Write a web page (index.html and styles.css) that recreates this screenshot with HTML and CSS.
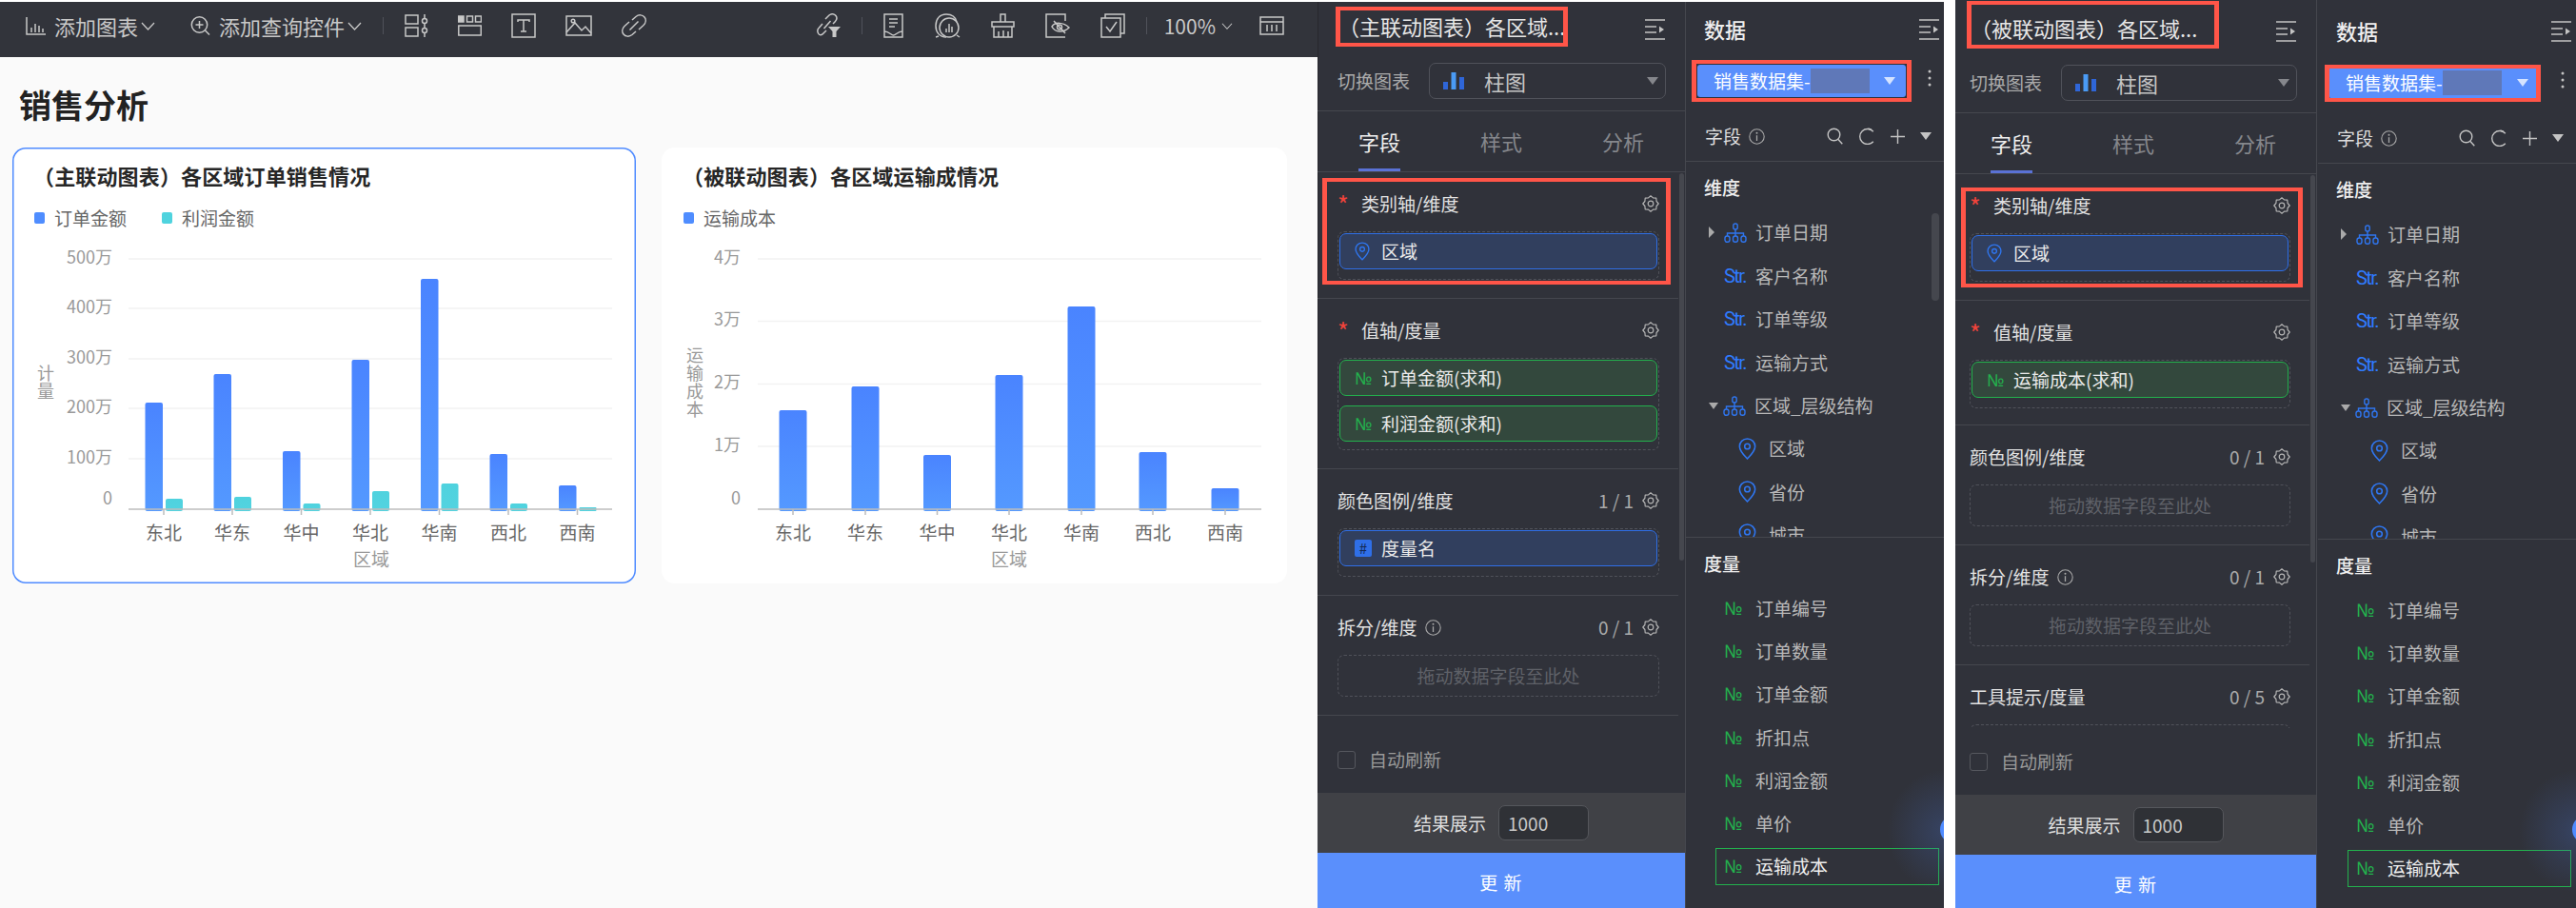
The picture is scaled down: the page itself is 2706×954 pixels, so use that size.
FILE: index.html
```html
<!DOCTYPE html>
<html lang="zh-CN">
<head>
<meta charset="utf-8">
<title>销售分析</title>
<link rel="stylesheet" href="styles.css">
</head>
<body>
<svg class="defs" aria-hidden="true">
  <defs>
    <linearGradient id="gBlue" x1="0" y1="0" x2="0" y2="1"><stop offset="0" stop-color="#4a84ff"/><stop offset="1" stop-color="#5499ff"/></linearGradient>
    <linearGradient id="gTeal" x1="0" y1="0" x2="0" y2="1"><stop offset="0" stop-color="#4fd2de"/><stop offset="1" stop-color="#52d3e0"/></linearGradient>
    <symbol id="gear" viewBox="0 0 18 18"><path d="M17.2 9 15.1 11.500 14.800 14.800 11.500 15.100 9 17.200 6.500 15.100 3.200 14.800 2.900 11.500.8 9 2.900 6.500 3.200 3.200 6.500 2.900 9 .8 11.500 2.900 14.800 3.200 15.100 6.500Z" fill="none" stroke="#b4b4b4" stroke-width="1.200" stroke-linejoin="round"/><circle cx="9" cy="9" r="2.800" fill="none" stroke="#b4b4b4" stroke-width="1.200"/></symbol>
    <symbol id="pin" viewBox="0 0 18 22"><path d="M9 1C4.600 1 1.200 4.400 1.200 8.600 1.200 13.500 6.500 18.500 9 21c2.500-2.500 7.800-7.500 7.800-12.400C16.800 4.400 13.400 1 9 1Z" fill="none" stroke="#2f76f0" stroke-width="1.500"/><circle cx="9" cy="8.600" r="2.700" fill="none" stroke="#2f76f0" stroke-width="1.500"/></symbol>
    <symbol id="hier" viewBox="0 0 24 21"><g fill="none" stroke="#2f76f0" stroke-width="1.400"><rect x="9.800" y="1" width="4.400" height="6" rx="2"/><path d="M12 7v4M3.500 14v-3h17v3M12 11v3"/><rect x="1" y="14" width="5" height="6.300" rx="2.200"/><rect x="9.500" y="14" width="5" height="6.300" rx="2.200"/><rect x="18" y="14" width="5" height="6.300" rx="2.200"/></g></symbol>
    <symbol id="collapse" viewBox="0 0 21 22"><path d="M0 1H21M0 8H12M0 14H12M0 21H21" fill="none" stroke="#c4c4c4" stroke-width="1.400"/><path d="M15 7.500 20 11 15 14.500Z" fill="#c4c4c4"/></symbol>
    <symbol id="info" viewBox="0 0 17 17"><circle cx="8.500" cy="8.500" r="7.700" fill="none" stroke="#a8a8a8" stroke-width="1.100"/><path d="M8.500 7.200V13" stroke="#a8a8a8" stroke-width="1.300"/><circle cx="8.500" cy="4.700" r="1" fill="#a8a8a8"/></symbol>
    <symbol id="search" viewBox="0 0 17 18"><circle cx="7.500" cy="7.500" r="6.300" fill="none" stroke="#c4c4c4" stroke-width="1.400"/><path d="M12 12.500 16.300 17.300" stroke="#c4c4c4" stroke-width="1.400"/></symbol>
    <symbol id="refresh" viewBox="0 0 18 18"><path d="M15.800 4.300A8 8 0 1 0 15.800 14.700" fill="none" stroke="#c4c4c4" stroke-width="1.400"/><path d="M10.500 1 14 2.300" stroke="#c4c4c4" stroke-width="1.400"/></symbol>
    <symbol id="plus" viewBox="0 0 15 15"><path d="M7.500 0V15M0 7.500H15" stroke="#c4c4c4" stroke-width="1.400"/></symbol>
    <symbol id="kebab" viewBox="0 0 4 18"><circle cx="2" cy="2" r="1.500" fill="#c4c4c4"/><circle cx="2" cy="9" r="1.500" fill="#c4c4c4"/><circle cx="2" cy="16" r="1.500" fill="#c4c4c4"/></symbol>
    <symbol id="columns" viewBox="0 0 22 18"><rect x="0" y="10" width="5" height="8" fill="#2f66d8"/><rect x="8.500" y="0" width="5" height="18" fill="#4a9bf5"/><rect x="17" y="5" width="5" height="13" fill="#2f66d8"/></symbol>
    <symbol id="chev" viewBox="0 0 15 9"><path d="M1 1 7.500 8 14 1" fill="none" stroke="#c8c8c8" stroke-width="1.300"/></symbol>
  </defs>
</svg>

<main class="stage">
  <section class="screen screen-a">
    <div class="editor">
      <header class="toolbar">
        <svg class="tsvg" width="21" height="19" viewBox="0 0 21 19"><path d="M1 0V18H21M6 16V11M10 16V7M14 16V9M18 16V12"/></svg>
        <span class="tool-text">添加图表</span>
        <svg class="chev" width="15" height="9"><use href="#chev"/></svg>
        <svg class="tsvg tool-next" width="21" height="20" viewBox="0 0 21 20"><circle cx="9.500" cy="9" r="8.200"/><path d="M9.500 5v8M5.500 9h8M15.500 15 20 19.500"/></svg>
        <span class="tool-text">添加查询控件</span>
        <svg class="chev" width="15" height="9"><use href="#chev"/></svg>
        <span class="tool-sep sep-left"></span>
        <div class="tool-icons left-icons">
          <svg class="tsvg" width="25" height="24" viewBox="0 0 25 24"><rect x="1" y="1" width="13" height="9"/><rect x="1" y="14" width="13" height="9"/><path d="M21 0V24"/><circle cx="21" cy="7" r="2.500" fill="#32343b"/><circle cx="21" cy="17" r="2.500" fill="#32343b"/></svg>
          <svg class="tsvg" width="25" height="22" viewBox="0 0 25 22"><rect x="0" y="1" width="6" height="6" fill="#c8c8c8"/><rect x="9.500" y="1" width="6" height="6"/><rect x="18.500" y="1" width="6" height="6"/><rect x=".8" y="11" width="23.500" height="10"/></svg>
          <svg class="tsvg" width="26" height="26" viewBox="0 0 26 26"><rect x="1" y="1" width="24" height="24"/><path d="M7 9V7H19V9M13 7V19M10 19H16"/></svg>
          <svg class="tsvg" width="28" height="22" viewBox="0 0 28 22"><rect x="1" y="1" width="26" height="20"/><path d="M1 18 10 8 17 16 21 12 27 19"/><circle cx="8" cy="6" r="1.800"/></svg>
          <svg class="tsvg" width="26" height="24" viewBox="0 0 26 24"><path d="M11 6 15 2.500C18 0 22 .5 24 3S25.500 9 23 11.500L18 16M15 18 11 21.500C8 24 4 23.500 2 21S.5 15 3 12.500L8 8M8.500 16.500 17.500 7.500"/></svg>
        </div>
        <div class="tool-icons right-icons">
          <svg class="tsvg" width="25" height="26" viewBox="0 0 25 26"><path d="M9 6 13 2C15.500 0 18.500.5 20 2.500S21 7 19 9L17 11M10 18 7 21C5 23.500 2.500 23 1.500 21S.8 16.500 2.500 15L6 11M7.500 16 14.500 8"/><path d="M12 14H25L20.500 19V25H16.500V19Z" fill="#c8c8c8" stroke="none"/></svg>
          <span class="tool-sep"></span>
          <svg class="tsvg" width="21" height="26" viewBox="0 0 21 26"><rect x="1" y="1" width="19" height="24"/><path d="M6 6H15M6 10H15M6 14H12M1 19 C6 19 8 23 10.500 23S15 19 20 19"/></svg>
          <svg class="tsvg" width="28" height="26" viewBox="0 0 28 26"><path d="M13 25C6 25 2 20 2 13S6 1 13 1C20 1 23 5 24 9"/><circle cx="16" cy="15" r="10"/><path d="M13 20V16M16 20V11M19 20V14M5 24 2 25M24 23 27 25"/></svg>
          <svg class="tsvg" width="25" height="26" viewBox="0 0 25 26"><path d="M10 9V1H15V9M1 9H24V14H1ZM3 14V25H22V14M8 25V19M13 25V18M18 25V19"/></svg>
          <svg class="tsvg" width="26" height="26" viewBox="0 0 26 26"><path d="M21 8V1H1V25H21"/><path d="M7 14C10 9 19 9 25 15 19 21 10 20 7 14ZM9 8 21 21"/><circle cx="15" cy="14.500" r="2.500"/></svg>
          <svg class="tsvg" width="26" height="26" viewBox="0 0 26 26"><path d="M5 5V1H25V21H21"/><rect x="1" y="5" width="20" height="20"/><path d="M6 14 10 19 17 9"/></svg>
          <span class="tool-sep"></span>
          <span class="tool-text zoom-val">100%</span>
          <svg class="chev zoom-chev" width="12" height="7"><use href="#chev"/></svg>
          <svg class="tsvg zoom-last" width="26" height="20" viewBox="0 0 26 20"><rect x="1" y="1" width="24" height="18"/><path d="M1 6H25M8 9V16M13 9V16M18 9V16"/></svg>
        </div>
      </header>

      <h1 class="page-title">销售分析</h1>

      <div class="cards">
        <article class="card card-active">
          <h2 class="card-title">（主联动图表）各区域订单销售情况</h2>
          <div class="legend">
            <i class="swatch blue"></i><span>订单金额</span>
            <i class="swatch teal"></i><span>利润金额</span>
          </div>
          <svg class="plot" width="655" height="363" viewBox="0 0 655 363">
            <g class="grid"><path d="M122 22H630M122 74H630M122 127H630M122 179H630M122 232H630"/></g>
            <g class="ylab">
              <text x="105" y="27">500万</text><text x="105" y="79">400万</text><text x="105" y="132">300万</text><text x="105" y="184">200万</text><text x="105" y="237">100万</text><text x="105" y="280">0</text>
            </g>
            <g fill="url(#gBlue)">
              <rect x="139.500" y="173" width="18.500" height="114" rx="2"/><rect x="211.500" y="143" width="18.500" height="144" rx="2"/><rect x="284" y="224" width="18.500" height="63" rx="2"/><rect x="356.500" y="128" width="18.500" height="159" rx="2"/><rect x="429" y="43" width="18.500" height="244" rx="2"/><rect x="501.500" y="227" width="18.500" height="60" rx="2"/><rect x="574" y="260" width="18.500" height="27" rx="2"/>
            </g>
            <g fill="url(#gTeal)">
              <rect x="161" y="274" width="18" height="13" rx="2"/><rect x="233" y="272" width="18" height="15" rx="2"/><rect x="305.500" y="279" width="18" height="8" rx="2"/><rect x="378" y="266" width="18" height="21" rx="2"/><rect x="450.500" y="258" width="18" height="29" rx="2"/><rect x="523" y="279" width="18" height="8" rx="2"/><rect x="595.500" y="283" width="18" height="4" rx="1"/>
            </g>
            <path class="axis" d="M122 285H630M159 285V291M231 285V291M303.500 285V291M376 285V291M448.500 285V291M521 285V291M593.500 285V291"/>
            <g class="xlab">
              <text x="159" y="317">东北</text><text x="231" y="317">华东</text><text x="303.500" y="317">华中</text><text x="376" y="317">华北</text><text x="448.500" y="317">华南</text><text x="521" y="317">西北</text><text x="593.500" y="317">西南</text>
            </g>
            <text class="xname" x="377" y="345">区域</text>
            <text class="yname" x="35" y="133">计量</text>
          </svg>
        </article>

        <article class="card">
          <h2 class="card-title">（被联动图表）各区域运输成情况</h2>
          <div class="legend">
            <i class="swatch blue"></i><span>运输成本</span>
          </div>
          <svg class="plot" width="657" height="363" viewBox="0 0 657 363">
            <g class="grid"><path d="M101 22H630M101 87.500H630M101 153.500H630M101 219H630"/></g>
            <g class="ylab">
              <text x="83" y="27">4万</text><text x="83" y="92">3万</text><text x="83" y="158">2万</text><text x="83" y="224">1万</text><text x="83" y="280">0</text>
            </g>
            <g fill="url(#gBlue)">
              <rect x="123.500" y="181" width="29" height="106" rx="2"/><rect x="199.500" y="156" width="29" height="131" rx="2"/><rect x="275" y="228" width="29" height="59" rx="2"/><rect x="350.500" y="144" width="29" height="143" rx="2"/><rect x="426.500" y="72" width="29" height="215" rx="2"/><rect x="501.500" y="225" width="29" height="62" rx="2"/><rect x="577.500" y="263" width="29" height="24" rx="2"/>
            </g>
            <path class="axis" d="M101 285H630M138 285V291M214 285V291M289.500 285V291M365 285V291M441 285V291M516 285V291M592 285V291"/>
            <g class="xlab">
              <text x="138" y="317">东北</text><text x="214" y="317">华东</text><text x="289.500" y="317">华中</text><text x="365" y="317">华北</text><text x="441" y="317">华南</text><text x="516" y="317">西北</text><text x="592" y="317">西南</text>
            </g>
            <text class="xname" x="365" y="345">区域</text>
            <text class="yname" x="35" y="114">运输成本</text>
          </svg>
        </article>
      </div>
    </div>

    <aside class="panel panel-a">
      <div class="p-head"><span class="p-title">（主联动图表）各区域...</span><svg class="p-collapse" width="21" height="22"><use href="#collapse"/></svg></div>
      <div class="switch"><span class="switch-label">切换图表</span><div class="select"><svg width="22" height="18"><use href="#columns"/></svg><span class="select-text">柱图</span><i class="tri-select"></i></div></div>
      <nav class="tabs"><span class="tab"><b class="tab-on">字段</b></span><span class="tab">样式</span><span class="tab">分析</span></nav>
      <div class="fields">
        <section class="fsec">
          <div class="fhead"><i class="star">*</i><span class="flabel">类别轴/维度</span><svg class="gear" width="18" height="18"><use href="#gear"/></svg></div>
          <div class="drop"><div class="pill pill-blue"><svg class="pin-s" width="16" height="20"><use href="#pin"/></svg><span>区域</span></div></div>
        </section>
        <section class="fsec">
          <div class="fhead"><i class="star">*</i><span class="flabel">值轴/度量</span><svg class="gear" width="18" height="18"><use href="#gear"/></svg></div>
          <div class="drop">
            <div class="pill pill-green"><span class="no">№</span><span>订单金额(求和)</span></div>
            <div class="pill pill-green"><span class="no">№</span><span>利润金额(求和)</span></div>
          </div>
        </section>
        <section class="fsec">
          <div class="fhead"><span class="flabel">颜色图例/维度</span><span class="count">1 / 1</span><svg class="gear" width="18" height="18"><use href="#gear"/></svg></div>
          <div class="drop"><div class="pill pill-blue"><span class="hash">#</span><span>度量名</span></div></div>
        </section>
        <section class="fsec">
          <div class="fhead"><span class="flabel">拆分/维度</span><svg class="finfo" width="17" height="17"><use href="#info"/></svg><span class="count">0 / 1</span><svg class="gear" width="18" height="18"><use href="#gear"/></svg></div>
          <div class="drop drop-empty">拖动数据字段至此处</div>
        </section>
        <i class="scroll"></i>
      </div>
      <div class="auto"><i class="check"></i><span>自动刷新</span></div>
      <div class="result"><span>结果展示</span><div class="num">1000</div></div>
      <div class="update">更 新</div>
      <i class="mark mark-a-title"></i>
      <i class="mark mark-a-axis"></i>
    </aside>

    <aside class="data">
      <div class="d-head"><span class="d-title">数据</span><svg class="d-collapse" width="21" height="22"><use href="#collapse"/></svg></div>
      <div class="dset"><div class="dselect"><span>销售数据集-</span><i class="blur"></i><i class="tri-data"></i></div><svg class="kebab" width="4" height="18"><use href="#kebab"/></svg></div>
      <div class="dfield"><span>字段</span><svg class="dinfo" width="17" height="17"><use href="#info"/></svg><svg class="dtool" width="17" height="18"><use href="#search"/></svg><svg width="18" height="18"><use href="#refresh"/></svg><svg width="15" height="15"><use href="#plus"/></svg><i class="tri-field"></i></div>
      <div class="dims">
        <div class="d-sect">维度</div>
        <div class="row"><i class="tri-r"></i><svg class="ico" width="24" height="21"><use href="#hier"/></svg><span>订单日期</span></div>
        <div class="row"><span class="str">Str.</span><span>客户名称</span></div>
        <div class="row"><span class="str">Str.</span><span>订单等级</span></div>
        <div class="row"><span class="str">Str.</span><span>运输方式</span></div>
        <div class="row"><i class="tri-d"></i><svg class="ico" width="24" height="21"><use href="#hier"/></svg><span>区域_层级结构</span></div>
        <div class="row sub"><svg class="ico" width="19" height="23"><use href="#pin"/></svg><span>区域</span></div>
        <div class="row sub"><svg class="ico" width="19" height="23"><use href="#pin"/></svg><span>省份</span></div>
        <div class="row sub"><svg class="ico" width="19" height="23"><use href="#pin"/></svg><span>城市</span></div>
        <i class="dscroll"></i>
      </div>
      <div class="d-sect">度量</div>
      <div class="row"><span class="no no-l">№</span><span>订单编号</span></div>
      <div class="row"><span class="no no-l">№</span><span>订单数量</span></div>
      <div class="row"><span class="no no-l">№</span><span>订单金额</span></div>
      <div class="row"><span class="no no-l">№</span><span>折扣点</span></div>
      <div class="row"><span class="no no-l">№</span><span>利润金额</span></div>
      <div class="row"><span class="no no-l">№</span><span>单价</span></div>
      <div class="row row-hl"><span class="no no-l">№</span><span>运输成本</span></div>
      <i class="glow"></i>
      <i class="mark mark-a-data"></i>
    </aside>
  </section>

  <section class="screen screen-b">
    <aside class="panel panel-b">
      <div class="p-head"><span class="p-title">（被联动图表）各区域...</span><svg class="p-collapse" width="21" height="22"><use href="#collapse"/></svg></div>
      <div class="switch"><span class="switch-label">切换图表</span><div class="select"><svg width="22" height="18"><use href="#columns"/></svg><span class="select-text">柱图</span><i class="tri-select"></i></div></div>
      <nav class="tabs"><span class="tab"><b class="tab-on">字段</b></span><span class="tab">样式</span><span class="tab">分析</span></nav>
      <div class="fields">
        <section class="fsec">
          <div class="fhead"><i class="star">*</i><span class="flabel">类别轴/维度</span><svg class="gear" width="18" height="18"><use href="#gear"/></svg></div>
          <div class="drop"><div class="pill pill-blue"><svg class="pin-s" width="16" height="20"><use href="#pin"/></svg><span>区域</span></div></div>
        </section>
        <section class="fsec fsec-tight">
          <div class="fhead"><i class="star">*</i><span class="flabel">值轴/度量</span><svg class="gear" width="18" height="18"><use href="#gear"/></svg></div>
          <div class="drop"><div class="pill pill-green"><span class="no">№</span><span>运输成本(求和)</span></div></div>
        </section>
        <section class="fsec">
          <div class="fhead"><span class="flabel">颜色图例/维度</span><span class="count">0 / 1</span><svg class="gear" width="18" height="18"><use href="#gear"/></svg></div>
          <div class="drop drop-empty">拖动数据字段至此处</div>
        </section>
        <section class="fsec">
          <div class="fhead"><span class="flabel">拆分/维度</span><svg class="finfo" width="17" height="17"><use href="#info"/></svg><span class="count">0 / 1</span><svg class="gear" width="18" height="18"><use href="#gear"/></svg></div>
          <div class="drop drop-empty">拖动数据字段至此处</div>
        </section>
        <section class="fsec">
          <div class="fhead"><span class="flabel">工具提示/度量</span><span class="count">0 / 5</span><svg class="gear" width="18" height="18"><use href="#gear"/></svg></div>
          <div class="drop drop-empty"></div>
        </section>
        <i class="scroll"></i>
      </div>
      <div class="auto"><i class="check"></i><span>自动刷新</span></div>
      <div class="result"><span>结果展示</span><div class="num">1000</div></div>
      <div class="update">更 新</div>
      <i class="mark mark-b-title"></i>
      <i class="mark mark-b-axis"></i>
    </aside>

    <aside class="data data-b">
      <div class="d-head"><span class="d-title">数据</span><svg class="d-collapse" width="21" height="22"><use href="#collapse"/></svg></div>
      <div class="dset"><div class="dselect"><span>销售数据集-</span><i class="blur"></i><i class="tri-data"></i></div><svg class="kebab" width="4" height="18"><use href="#kebab"/></svg></div>
      <div class="dfield"><span>字段</span><svg class="dinfo" width="17" height="17"><use href="#info"/></svg><svg class="dtool" width="17" height="18"><use href="#search"/></svg><svg width="18" height="18"><use href="#refresh"/></svg><svg width="15" height="15"><use href="#plus"/></svg><i class="tri-field"></i></div>
      <div class="dims">
        <div class="d-sect">维度</div>
        <div class="row"><i class="tri-r"></i><svg class="ico" width="24" height="21"><use href="#hier"/></svg><span>订单日期</span></div>
        <div class="row"><span class="str">Str.</span><span>客户名称</span></div>
        <div class="row"><span class="str">Str.</span><span>订单等级</span></div>
        <div class="row"><span class="str">Str.</span><span>运输方式</span></div>
        <div class="row"><i class="tri-d"></i><svg class="ico" width="24" height="21"><use href="#hier"/></svg><span>区域_层级结构</span></div>
        <div class="row sub"><svg class="ico" width="19" height="23"><use href="#pin"/></svg><span>区域</span></div>
        <div class="row sub"><svg class="ico" width="19" height="23"><use href="#pin"/></svg><span>省份</span></div>
        <div class="row sub"><svg class="ico" width="19" height="23"><use href="#pin"/></svg><span>城市</span></div>
      </div>
      <div class="d-sect">度量</div>
      <div class="row"><span class="no no-l">№</span><span>订单编号</span></div>
      <div class="row"><span class="no no-l">№</span><span>订单数量</span></div>
      <div class="row"><span class="no no-l">№</span><span>订单金额</span></div>
      <div class="row"><span class="no no-l">№</span><span>折扣点</span></div>
      <div class="row"><span class="no no-l">№</span><span>利润金额</span></div>
      <div class="row"><span class="no no-l">№</span><span>单价</span></div>
      <div class="row row-hl"><span class="no no-l">№</span><span>运输成本</span></div>
      <i class="glow"></i>
      <i class="mark mark-b-data"></i>
    </aside>
  </section>
</main>
</body>
</html>
```
FILE: styles.css
```css
* { box-sizing: border-box; }
html, body { margin: 0; height: 100%; overflow: hidden; }
body {
  font-family: "Noto Sans CJK SC", "Noto Sans", sans-serif;
  font-size: 19px;
  line-height: 28px;
  background: #fff;
}
i { font-style: normal; display: block; }
.defs { position: absolute; width: 0; height: 0; }

.stage { display: flex; width: 2706px; height: 954px; }
.screen { display: flex; height: 954px; }
.screen-a { width: 2042px; padding-top: 2px; }
.screen-b { width: 652px; margin-left: 12px; }

/* editor */
.editor { width: 1384px; background: #fafafa; }
.toolbar {
  display: flex;
  align-items: center;
  height: 58px;
  padding: 0 35px 8px 27px;
  background: #32343b;
  color: #c8c8c8;
}
.tsvg { fill: none; stroke: #c8c8c8; stroke-width: 1.5; flex: none; }
.tool-text { font-size: 22px; margin-left: 9px; white-space: nowrap; }
.chev { margin-left: 3px; flex: none; }
.tool-next { margin-left: 37px; }
.tool-sep { width: 1px; height: 18px; background: #50525a; margin: 0 -10px; flex: none; }
.sep-left { margin: 0 0 0 22px; }
.tool-icons { display: flex; align-items: center; }
.left-icons { gap: 31px; margin-left: 22px; }
.right-icons { gap: 32px; margin-left: auto; }
.zoom-val { margin-left: -4px; font-size: 21px; }
.zoom-chev { margin-left: -26px; }
.zoom-last { margin-left: -4px; }

.page-title { margin: 30px 0 0 20px; font-size: 34px; line-height: 40px; font-weight: 700; color: #222; }
.cards { display: flex; gap: 27px; margin: 25px 0 0 13px; }
.card { width: 657px; height: 458px; background: #fff; border-radius: 14px; }
.card-active { width: 655px; box-shadow: inset 0 0 0 1.5px #4f8bff; }
.card-title { margin: 0; padding: 14px 0 0 22px; font-size: 22px; line-height: 30px; font-weight: 700; letter-spacing: .15px; color: #262626; }
.legend { display: flex; align-items: center; height: 22px; margin-top: 19px; padding-left: 23px; font-size: 19px; line-height: 22px; color: #666; }
.swatch { width: 11px; height: 12px; border-radius: 2px; margin-right: 10px; }
.swatch.blue { background: #4f8dff; }
.swatch.teal { background: #4fd3de; margin-left: 37px; }
.plot { display: block; margin-top: 10px; }
.plot text { font-family: "Noto Sans CJK SC", "Noto Sans", sans-serif; font-size: 19px; }
.grid path { fill: none; stroke: #f2f2f2; stroke-width: 1.5; }
.axis { fill: none; stroke: #bdbdbd; stroke-width: 1.5; }
.ylab text { text-anchor: end; fill: #999; font-size: 18px; }
.xlab text { text-anchor: middle; fill: #666; }
.plot .xname { text-anchor: middle; fill: #999; }
.plot .yname { fill: #999; font-size: 18px; letter-spacing: 1px; writing-mode: vertical-rl; text-orientation: upright; }

/* config panel */
.panel {
  --pad: 21px;
  position: relative;
  display: flex;
  flex-direction: column;
  width: 386px;
  background: #30323a;
  color: #ddd;
  box-shadow: inset 1px 0 #27282d;
  overflow: hidden;
}
.panel-b { --pad: 15px; width: 379px; padding-top: 4px; box-shadow: none; }
.p-head { display: flex; align-items: center; justify-content: space-between; flex: none; height: 58px; padding: 0 21px 0 calc(var(--pad) + 1px); }
.p-title { font-size: 22px; line-height: 30px; color: #e6e6e6; margin-bottom: 8px; white-space: nowrap; }
.switch { display: flex; gap: 20px; flex: none; height: 57px; padding: 6px 20px 0 var(--pad); border-bottom: 1px solid #45474e; }
.switch-label { line-height: 37px; color: #aaa; white-space: nowrap; }
.select { display: flex; align-items: center; flex: 1; height: 38px; padding: 0 7px 0 14px; border: 1px solid #50525a; border-radius: 7px; }
.select-text { margin-left: 21px; font-size: 22px; color: #c4c4c4; }
.tri-select { margin-left: auto; border: 6.5px solid transparent; border-top: 8px solid #85878c; border-bottom: 0; }
.tabs { display: grid; grid-template-columns: repeat(3, 128px); flex: none; height: 64px; padding-left: 1px; border-bottom: 1px solid #45474e; font-size: 22px; color: #85878c; }
.panel-b .tabs { margin-left: -5px; padding-left: 0; width: 384px; }
.tab { text-align: center; line-height: 62px; }
.tab-on { display: inline-block; height: 63px; font-weight: 400; color: #eee; border-bottom: 3px solid #5a72d6; }
.fields { position: relative; flex: none; height: 582px; overflow: hidden; }
.fsec { margin-right: 7px; padding: 19px 20px 19px var(--pad); border-bottom: 1px solid #45474e; }
.fsec-tight { padding-bottom: 17px; }
.fhead { display: flex; align-items: center; height: 28px; margin-bottom: 15px; }
.star { width: 25px; color: #f0433a; font-size: 25px; line-height: 28px; }
.flabel { color: #e2e2e2; white-space: nowrap; }
.finfo { margin-left: 9px; }
.count { margin-left: auto; color: #aaa; white-space: nowrap; }
.count + .gear { margin-left: 9px; }
.star + .flabel + .gear { margin-left: auto; }
.drop { min-height: 51px; padding: 1px 1px 8px; border: 1px dashed #50525a; border-radius: 7px; }
.drop-empty { min-height: 44px; height: 44px; padding: 0; text-align: center; line-height: 42px; color: #5f6168; }
.pill { display: flex; align-items: center; height: 38px; padding-left: 15px; border: 1.5px solid; border-radius: 7px; color: #eaeaea; }
.pill + .pill { margin-top: 10px; }
.pill-blue { background: #313f5e; border-color: #2f6fe8; }
.pill-green { background: #33483d; border-color: #23b14d; }
.pin-s { margin-right: 12px; }
.no { width: 28px; font-family: "Noto Sans", sans-serif; font-size: 18px; color: #23b14d; flex: none; white-space: nowrap; }
.hash { width: 18px; height: 18px; margin-right: 10px; border-radius: 2px; background: #2f6fe8; color: #14284f; font-size: 15px; line-height: 18px; text-align: center; }
.scroll { position: absolute; top: 1px; right: 1px; width: 5px; height: 407px; border-radius: 3px; background: #45474e; }
.auto { display: flex; align-items: center; flex: none; height: 70px; padding-left: var(--pad); color: #999; }
.check { width: 19px; height: 19px; margin-right: 14px; border: 1px solid #55575e; border-radius: 3px; }
.result { display: flex; align-items: center; justify-content: center; gap: 13px; flex: none; height: 63px; background: #404146; color: #dedede; }
.num { width: 95px; height: 37px; padding-left: 9px; border: 1px solid #55575c; border-radius: 7px; background: #2f3136; line-height: 35px; color: #c8c8c8; }
.update { flex: 1; background: #5a8ffc; color: #fff; text-align: center; line-height: 62px; letter-spacing: 1px; }

/* data panel */
.data { position: relative; flex: none; width: 272px; background: #30323a; border-left: 1px solid #45474e; color: #b8b8b8; overflow: hidden; }
.data-b { width: 273px; padding: 4px 0 0 1px; }
.d-head { display: flex; align-items: center; justify-content: space-between; height: 58px; padding: 0 5px 0 19px; }
.d-title { font-size: 22px; font-weight: 500; color: #eee; margin-bottom: 2px; }
.dset { display: flex; align-items: flex-start; height: 60px; padding: 8px 0 0 12px; }
.dselect { display: flex; align-items: center; width: 219px; height: 34px; padding: 0 11px 0 17px; border-radius: 3px; background: #5a8ffc; color: #fff; white-space: nowrap; }
.data-b .dselect { width: 220px; }
.blur { width: 62px; height: 26px; background: #5f78b8; }
.tri-data { margin-left: auto; border: 6px solid transparent; border-top: 8px solid #d5e3ff; border-bottom: 0; }
.kebab { margin: 5px 0 0 23px; }
.dfield { display: flex; align-items: center; gap: 16px; height: 50px; padding: 0 13px 3px 20px; border-bottom: 1px solid #45474e; color: #ddd; }
.dinfo { margin-left: -8px; }
.dtool { margin-left: auto; }
.tri-field { border: 6px solid transparent; border-top: 8px solid #c4c4c4; border-bottom: 0; }
.dims { position: relative; height: 395px; border-bottom: 1px solid #45474e; overflow: hidden; }
.d-sect { height: 51px; padding: 3px 0 0 19px; line-height: 48px; font-weight: 500; color: #eee; }
.row { position: relative; display: flex; align-items: center; height: 45.3px; padding-left: 40px; white-space: nowrap; }
.dims .d-sect + .row { height: 46.5px; }
.ico { width: 24px; margin-right: 9px; flex: none; }
.row.sub { padding-left: 55px; }
.row.sub .ico { width: 19px; margin-right: 13px; }
.str { width: 33px; flex: none; font-family: Roboto, sans-serif; font-size: 20px; letter-spacing: -1.6px; color: #2f7bff; }
.no-l { width: 33px; font-size: 19px; }
.tri-r { margin: 0 10px 0 -16px; border: 6px solid transparent; border-left: 6px solid #aaa; border-right: 0; }
.tri-d { margin: 0 5px 0 -16px; border: 5.5px solid transparent; border-top: 7px solid #aaa; border-bottom: 0; }
.dscroll { position: absolute; top: 54px; right: 5px; width: 8px; height: 92px; border-radius: 4px; background: #45474e; }
.row-hl { color: #eee; }
.row-hl::before { content: ""; position: absolute; left: 31px; right: 5px; top: 3px; bottom: 3px; border: 1.5px solid #23b14d; }
.glow { position: absolute; right: 0; bottom: 16px; width: 60px; height: 130px; background: radial-gradient(ellipse at 100% 50%, rgba(70, 110, 200, .28), rgba(70, 110, 200, 0) 70%); }
.glow::after { content: ""; position: absolute; right: -20px; top: 50px; width: 24px; height: 27px; border-radius: 50%; background: #4f8bff; }

/* red annotation boxes over the screenshot */
.mark { position: absolute; border-style: solid; border-color: #ff5548; border-width: 4px 5px; pointer-events: none; }
.mark-a-title { left: 19px; top: 5px; width: 244px; height: 42px; }
.mark-a-axis { left: 5px; top: 185px; width: 366px; height: 112px; }
.mark-a-data { left: 6px; top: 61px; width: 231px; height: 44px; }
.mark-b-title { left: 12px; top: 1px; width: 265px; height: 50px; }
.mark-b-axis { left: 6px; top: 197px; width: 359px; height: 105px; }
.mark-b-data { left: 8px; top: 68px; width: 227px; height: 39px; }
```
